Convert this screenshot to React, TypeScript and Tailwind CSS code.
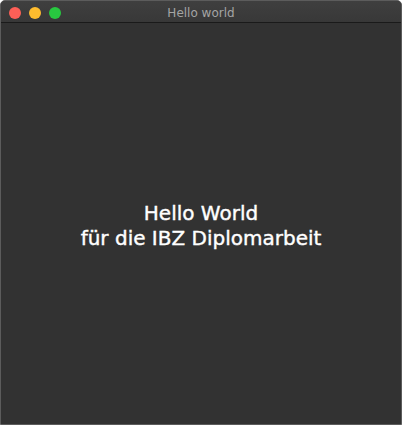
export default function App() {
  return (
    <div className="w-[402px] h-[425px] bg-white">
      <div className="w-full h-full flex flex-col rounded-t-[5px] overflow-hidden border border-[#5c5c5c] bg-[#323232]">
        <div className="relative h-[22px] shrink-0 flex items-center bg-gradient-to-b from-[#3f3f3f] to-[#383838] border-b border-[#1a1a1a]">
          <div className="flex items-center gap-[8px] pl-[8px] pt-[2px]">
            <span className="w-[12px] h-[12px] rounded-full bg-[#fe5f57]" />
            <span className="w-[12px] h-[12px] rounded-full bg-[#febc2e]" />
            <span className="w-[12px] h-[12px] rounded-full bg-[#28c840]" />
          </div>
          <div className="absolute inset-0 pt-[2px] flex items-center justify-center text-[12px] text-[#a4a4a4] font-['DejaVu_Sans',sans-serif]">
            Hello world
          </div>
        </div>
        <div className="flex-1 flex items-center justify-center">
          <div className="text-center text-white text-[20px] leading-[25px] font-['DejaVu_Sans',sans-serif] pt-[4px] [-webkit-text-stroke:0.4px_#ffffff]">
            <div>Hello World</div>
            <div>für die IBZ Diplomarbeit</div>
          </div>
        </div>
      </div>
    </div>
  );
}
